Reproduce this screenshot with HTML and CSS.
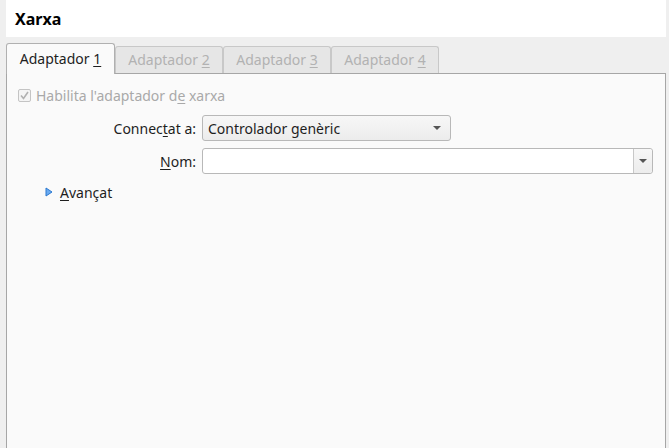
FILE: index.html
```html
<!DOCTYPE html>
<html>
<head>
<meta charset="utf-8">
<link rel="stylesheet" href="styles.css">
</head>
<body>
<div class="window">
  <div class="header"><span class="title">Xarxa</span></div>
  <div class="tabs">
    <div class="tab active"><span>Adaptador <u>1</u></span></div>
    <div class="tab"><span>Adaptador <u>2</u></span></div>
    <div class="tab"><span>Adaptador <u>3</u></span></div>
    <div class="tab"><span>Adaptador <u>4</u></span></div>
  </div>
  <div class="pane">
    <label class="check">
      <span class="box"><svg width="11" height="11" viewBox="0 0 11 11"><path d="M2 5.5 L4.5 8.5 L9 2" fill="none" stroke="#b0b0b0" stroke-width="1.6"/></svg></span>
      <span>Habilita l'adaptador d<u>e</u> xarxa</span>
    </label>
    <div class="form">
      <div class="lbl">Connec<u>t</u>at a:</div>
      <div class="combo"><span>Controlador genèric</span><span class="arrow"></span></div>
      <div class="lbl"><u>N</u>om:</div>
      <div class="edit"><span class="field"></span><span class="btn"><span class="arrow"></span></span></div>
    </div>
    <div class="adv">
      <svg width="8" height="10" viewBox="0 0 8 10"><path d="M1 1 L7 5 L1 9 Z" fill="#6aaaf0" stroke="#2a78d0" stroke-width="1" stroke-linejoin="round"/></svg>
      <span><u>A</u>vançat</span>
    </div>
  </div>
</div>
</body>
</html>
```

FILE: styles.css
```css
* { box-sizing: border-box; }
html, body { margin: 0; padding: 0; }
body {
  width: 669px;
  height: 448px;
  overflow: hidden;
  background: #efefef;
  font-family: "Noto Sans", "DejaVu Sans", sans-serif;
  font-size: 14px;
  color: #1e1e1e;
}
u { text-decoration: underline; text-underline-offset: 2px; }
.window {
  padding: 0 3px 0 6px;
  display: flex;
  flex-direction: column;
  height: 448px;
}
.header {
  background: #ffffff;
  height: 37px;
  display: flex;
  align-items: center;
  padding-left: 9px;
}
.title {
  font-weight: bold;
  font-size: 16px;
  color: #000;
}
.tabs {
  display: flex;
  align-items: flex-end;
  height: 36px;
  position: relative;
  z-index: 1;
}
.tab {
  height: 27px;
  width: 108px;
  border: 1px solid #c8c8c8;
  border-bottom: none;
  border-radius: 3px 3px 0 0;
  background: #e6e6e6;
  color: #b2b2b2;
  display: flex;
  align-items: center;
  justify-content: center;
  padding-bottom: 2px;
}
.tab.active {
  width: 109px;
  height: 31px;
  background: #fafafa;
  color: #1e1e1e;
  border-color: #b0b0b0;
  margin-bottom: -1px;
  padding-bottom: 1px;
}
.pane {
  flex: 1;
  background: #fafafa;
  border: 1px solid #a6a6a6;
  border-bottom: none;
  padding: 12px 11px 0 11px;
}
.check {
  display: flex;
  align-items: center;
  gap: 5px;
  color: #a9a9a9;
  height: 18px;
}
.box {
  width: 13px;
  height: 13px;
  border: 1px solid #c4c4c4;
  border-radius: 2px;
  background: #f4f4f4;
  display: flex;
  align-items: center;
  justify-content: center;
}
.form {
  display: grid;
  grid-template-columns: 178px 451px;
  column-gap: 6px;
  row-gap: 7px;
  margin-top: 11px;
  align-items: center;
}
.lbl { text-align: right; }
.combo {
  width: 249px;
  height: 26px;
  border: 1px solid #b8b8b8;
  border-radius: 3px;
  background: linear-gradient(#f7f7f7, #ececec);
  display: flex;
  align-items: center;
  justify-content: space-between;
  padding: 0 9px 0 5px;
}
.arrow {
  width: 0; height: 0;
  border-left: 4px solid transparent;
  border-right: 4px solid transparent;
  border-top: 4px solid #555;
}
.edit {
  height: 26px;
  border: 1px solid #b8b8b8;
  border-radius: 3px;
  background: #fff;
  display: flex;
}
.field { flex: 1; }
.btn {
  width: 19px;
  border-left: 1px solid #c8c8c8;
  background: linear-gradient(#f7f7f7, #ececec);
  display: flex;
  align-items: center;
  justify-content: center;
  border-radius: 0 3px 3px 0;
}
.adv {
  display: flex;
  align-items: center;
  gap: 7px;
  margin-top: 10px;
  padding-left: 27px;
  height: 16px;
}
```
